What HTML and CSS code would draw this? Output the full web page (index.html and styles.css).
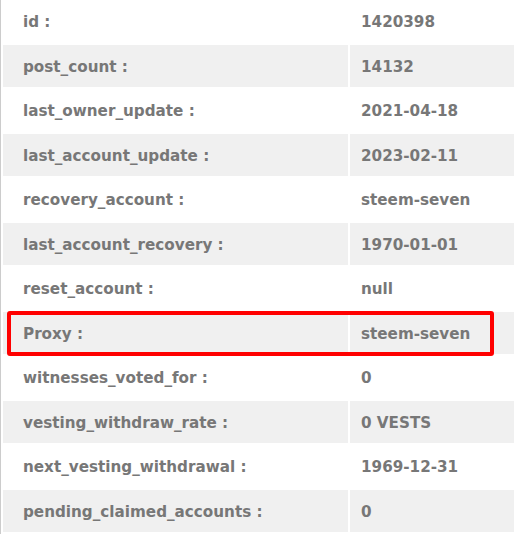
FILE: index.html
```html
<!DOCTYPE html>
<html>
<head>
<meta charset="utf-8">
<link rel="stylesheet" href="styles.css">
</head>
<body>
<div class="table">
  <div class="row"><div class="k">id :</div><div class="v">1420398</div></div>
  <div class="row alt"><div class="k">post_count :</div><div class="v">14132</div></div>
  <div class="row"><div class="k">last_owner_update :</div><div class="v">2021-04-18</div></div>
  <div class="row alt"><div class="k">last_account_update :</div><div class="v">2023-02-11</div></div>
  <div class="row"><div class="k">recovery_account :</div><div class="v">steem-seven</div></div>
  <div class="row alt"><div class="k">last_account_recovery :</div><div class="v">1970-01-01</div></div>
  <div class="row"><div class="k">reset_account :</div><div class="v">null</div></div>
  <div class="row alt marked"><div class="k">Proxy :</div><div class="v">steem-seven</div><div class="highlight"></div></div>
  <div class="row"><div class="k">witnesses_voted_for :</div><div class="v">0</div></div>
  <div class="row alt"><div class="k">vesting_withdraw_rate :</div><div class="v">0 VESTS</div></div>
  <div class="row"><div class="k">next_vesting_withdrawal :</div><div class="v">1969-12-31</div></div>
  <div class="row alt"><div class="k">pending_claimed_accounts :</div><div class="v">0</div></div>
</div>
</body>
</html>
```
FILE: styles.css
```css
html, body {
  margin: 0;
  padding: 0;
  background: #fff;
}
body {
  width: 514px;
  height: 534px;
  overflow: hidden;
  font-family: "DejaVu Sans", Verdana, sans-serif;
  font-weight: bold;
  font-size: 15.2px;
  color: #777;
}
.table {
  border-left: 1px solid #ccc;
  padding-left: 2px;
  display: flex;
  flex-direction: column;
  gap: 2px;
  min-height: 534px;
  box-sizing: border-box;
}
.row {
  display: grid;
  grid-template-columns: 345px 1fr;
  column-gap: 2px;
  height: 42.5px;
}
.row.marked {
  position: relative;
}
.k, .v {
  display: flex;
  align-items: center;
  padding-top: 2px;
}
.k {
  padding-left: 20px;
}
.v {
  padding-left: 11px;
}
.alt .k, .alt .v {
  background: #f0f0f0;
}
.highlight {
  position: absolute;
  left: 4px;
  top: -1px;
  width: 487px;
  height: 45px;
  box-sizing: border-box;
  border: 4px solid #f00;
  border-radius: 3px;
}
```
